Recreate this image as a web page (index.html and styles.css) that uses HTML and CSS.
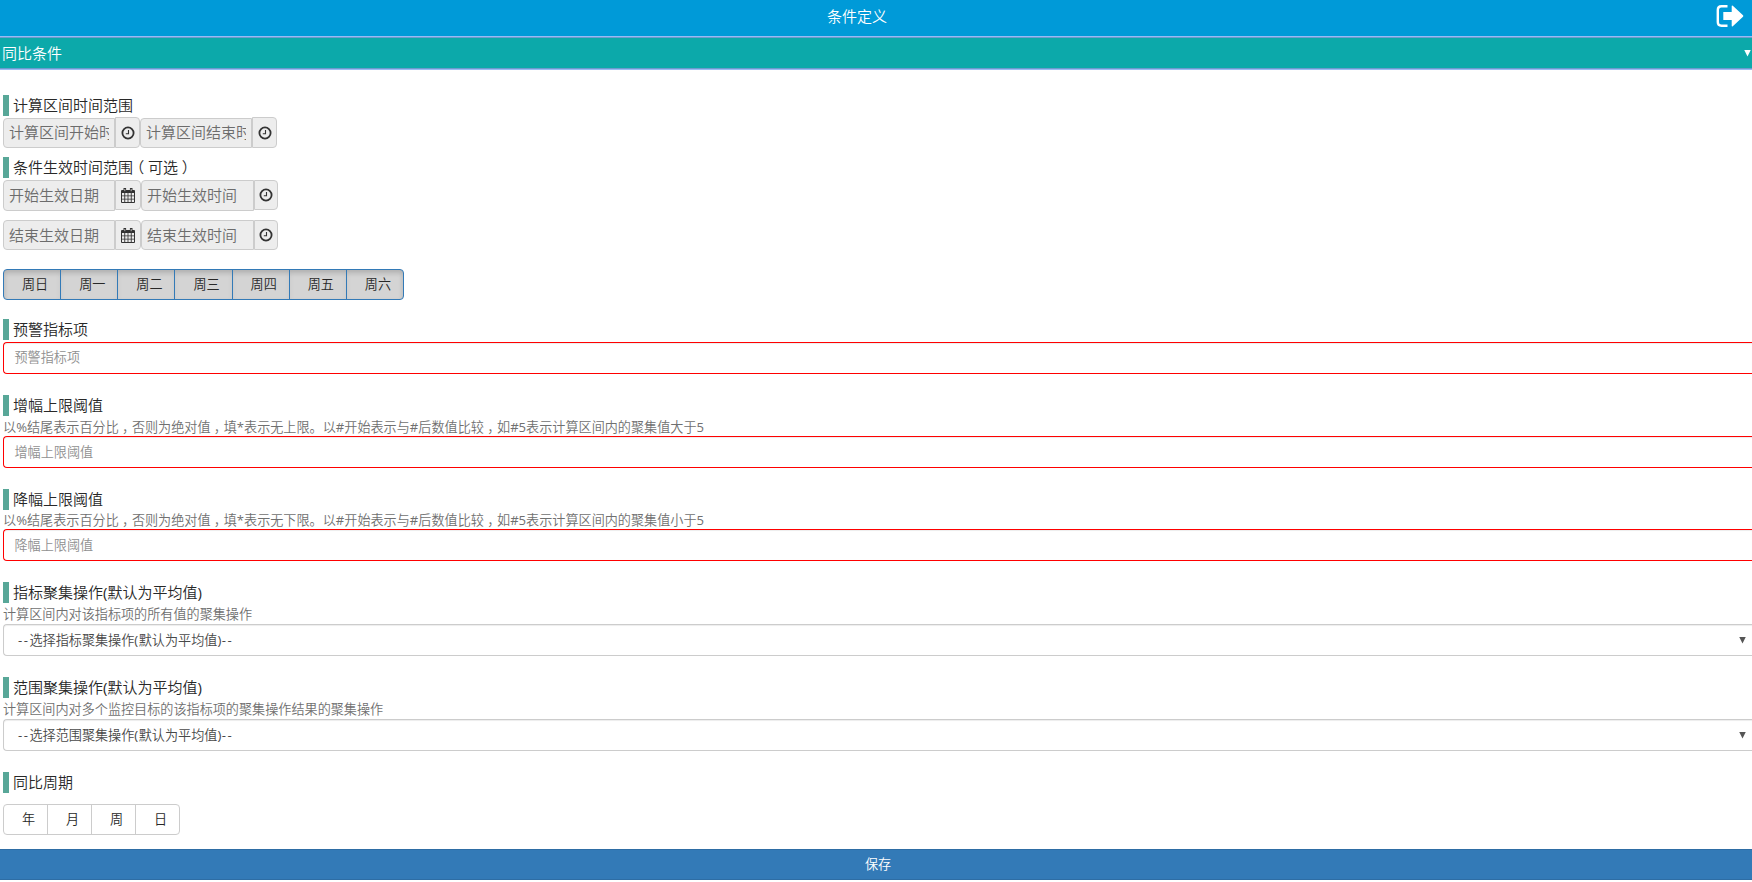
FILE: index.html
```html
<!DOCTYPE html>
<html lang="zh-CN">
<head>
<meta charset="utf-8">
<title>条件定义</title>
<link rel="stylesheet" href="styles.css">
</head>
<body>
<svg class="defs" width="0" height="0">
  <symbol id="clock" viewBox="0 0 14 14"><circle cx="7" cy="7" r="5.6" fill="none" stroke="#333" stroke-width="1.8"/><path d="M7.5 4v3.7H4.8" fill="none" stroke="#333" stroke-width="1.1"/></symbol>
  <symbol id="cal" viewBox="0 0 14 15"><path fill="#333" d="M1 2h12a1 1 0 0 1 1 1v11a1 1 0 0 1-1 1H1a1 1 0 0 1-1-1V3a1 1 0 0 1 1-1z"/><path fill="#333" d="M2.5 0h2.6v4H2.5zM8.9 0h2.6v4H8.9z"/><path fill="#ededed" d="M1 5h2.3v2.4H1zM4.2 5h2.4v2.4H4.2zM7.4 5h2.4v2.4H7.4zM10.7 5H13v2.4h-2.3zM1 8.2h2.3v2.6H1zM4.2 8.2h2.4v2.6H4.2zM7.4 8.2h2.4v2.6H7.4zM10.7 8.2H13v2.6h-2.3zM1 11.6h2.3V14H1zM4.2 11.6h2.4V14H4.2zM7.4 11.6h2.4V14H7.4zM10.7 11.6H13V14h-2.3z"/><path d="M3.8 1v2.2M10.2 1v2.2" stroke="#ededed" stroke-width=".7"/></symbol>
</svg>
<header class="topbar">
  <span class="topbar-title">条件定义</span>
  <svg class="exit" viewBox="0 0 28 22" width="28" height="22"><path d="M11.5 1.3H5.5Q1.8 1.3 1.8 5v12Q1.8 20.7 5.5 20.7h6" fill="none" stroke="#fff" stroke-width="2.4"/><path fill="#fff" d="M7.3 7h8.4V1.2Q15.7 0 16.8.8L27 10.3q.7.7 0 1.4L16.8 21.2q-1.1.8-1.1-.4V15H7.3z"/></svg>
</header>
<div class="panel-head"><span>同比条件</span><i class="tri white"></i></div>
<main class="form">
  <section class="s1">
    <h4>计算区间时间范围</h4>
    <div class="row late">
      <input class="field" readonly placeholder="计算区间开始时间"><div class="addon"><svg><use href="#clock"/></svg></div><input class="field" readonly placeholder="计算区间结束时间"><div class="addon"><svg><use href="#clock"/></svg></div>
    </div>
  </section>
  <section class="s2">
    <h4>条件生效时间范围<b>（</b>可选<b>）</b></h4>
    <div class="row wide tall">
      <input class="field" readonly placeholder="开始生效日期"><div class="addon"><svg class="cal"><use href="#cal"/></svg></div><input class="field" readonly placeholder="开始生效时间"><div class="addon"><svg><use href="#clock"/></svg></div>
    </div>
    <div class="row wide">
      <input class="field" readonly placeholder="结束生效日期"><div class="addon"><svg class="cal"><use href="#cal"/></svg></div><input class="field" readonly placeholder="结束生效时间"><div class="addon"><svg><use href="#clock"/></svg></div>
    </div>
    <div class="group days"><span>周日</span><span>周一</span><span>周二</span><span>周三</span><span>周四</span><span>周五</span><span>周六</span></div>
  </section>
  <section class="s3">
    <h4>预警指标项</h4>
    <div class="input">预警指标项</div>
  </section>
  <section class="s4">
    <h4>增幅上限阈值</h4>
    <p>以<i class="l">%</i>结尾表示百分比<b>，</b>否则为绝对值<b>，</b>填<i class="l">*</i>表示无上限。以<i class="l">#</i>开始表示与<i class="l">#</i>后数值比较<b>，</b>如<i class="l">#5</i>表示计算区间内的聚集值大于<i class="l">5</i></p>
    <div class="input">增幅上限阈值</div>
  </section>
  <section class="s5">
    <h4>降幅上限阈值</h4>
    <p>以<i class="l">%</i>结尾表示百分比<b>，</b>否则为绝对值<b>，</b>填<i class="l">*</i>表示无下限。以<i class="l">#</i>开始表示与<i class="l">#</i>后数值比较<b>，</b>如<i class="l">#5</i>表示计算区间内的聚集值小于<i class="l">5</i></p>
    <div class="input">降幅上限阈值</div>
  </section>
  <section class="s6">
    <h4>指标聚集操作<i class="l">(</i>默认为平均值<i class="l">)</i></h4>
    <p>计算区间内对该指标项的所有值的聚集操作</p>
    <div class="input select"><span><em>--</em>选择指标聚集操作<i class="l">(</i>默认为平均值<i class="l">)</i><em>--</em></span><i class="tri"></i></div>
  </section>
  <section class="s7">
    <h4>范围聚集操作<i class="l">(</i>默认为平均值<i class="l">)</i></h4>
    <p>计算区间内对多个监控目标的该指标项的聚集操作结果的聚集操作</p>
    <div class="input select"><span><em>--</em>选择范围聚集操作<i class="l">(</i>默认为平均值<i class="l">)</i><em>--</em></span><i class="tri"></i></div>
  </section>
  <section class="s8">
    <h4>同比周期</h4>
    <div class="group period"><span>年</span><span>月</span><span>周</span><span>日</span></div>
  </section>
</main>
<div class="save">保存</div>
</body>
</html>
```
FILE: styles.css
```css
* { box-sizing: border-box; }
body { margin: 0; height: 882px; overflow: hidden; background: #fff; color: #282828; font: 350 15px/21px "Open Sans", "Noto Sans CJK SC", sans-serif; white-space: nowrap; }
.defs { position: absolute; }
.topbar { height: 36px; background: #009ad8; color: #fff; display: grid; grid-template-columns: 1fr auto 1fr; align-items: center; padding: 0 8px 4px; }
.topbar-title { grid-column: 2; margin-right: 38px; }
.exit { justify-self: end; }
.panel-head { height: 34px; background: #0ca9aa; color: #fff; border-top: 1px solid #99bbf5; border-bottom: 1px solid #99bbf5; box-shadow: inset 0 1px #6c9bcd, inset 0 -1px #6c9bcd; display: flex; justify-content: space-between; align-items: center; padding: 0 1px 0 2px; }
.tri { width: 7px; height: 7px; background: #555; clip-path: polygon(0 0, 100% 0, 50% 100%); }
.tri.white { background: #fff; }
.form { padding-left: 3px; height: 779px; overflow: hidden; }
section { overflow: hidden; }
h4 { margin: 0; height: 21px; border-left: 6px solid #58a798; padding-left: 4px; font-size: 15px; font-weight: 350; line-height: 21px; }
b { font-family: "Noto Sans CJK SC", sans-serif; font-weight: 350; font-feature-settings: "halt"; padding: 0 .25em; line-height: 1; }
p { margin: 0; height: 20px; font-size: 13.125px; line-height: 22px; color: #707070; }
em { font-style: normal; font-weight: 400; letter-spacing: 1.5px; }
.l { font-style: normal; font-weight: 400; }
.select .l { letter-spacing: .5px; }
.s1 { height: 62px; margin-top: 25px; }
.s2 { height: 162px; }
.s3 { height: 76px; }
.s4 { height: 94px; }
.s5 { height: 93px; }
.s6, .s7 { height: 95px; }
.s8 { height: 70px; }
.row { display: flex; height: 30px; margin-top: 9px; color: #777; }
.late { height: 31px; margin-top: 1px; align-items: flex-end; }
.tall { height: 31px; margin-top: 2px; align-items: flex-start; }
.field { width: 112px; height: 30px; margin: 0; border: 1px solid #ccc; border-radius: 4px 0 0 4px; background: #ededed; padding: 0 5px 1px; font: inherit; color: #6c6c6c; outline: 0; }
.field::placeholder { color: #6c6c6c; opacity: 1; }
.late .field { padding-bottom: 2px; }
.tall .field { height: 31px; }
.addon { width: 25px; height: 30px; border: 1px solid #ccc; border-radius: 0 4px 4px 0; background: #ededed; display: grid; place-items: center; }
.late .addon { height: 31px; }
.addon svg { width: 14px; height: 14px; }
.addon svg.cal { height: 15px; }
.wide .addon:nth-child(2) { width: 26px; }
.wide .field:nth-child(3) { width: 113px; }
.wide .addon:nth-child(4) { width: 24px; }
.group { display: flex; height: 31px; font-size: 13.125px; line-height: 29px; border: 1px solid #ccc; border-radius: 4px; overflow: hidden; }
.group span { flex: 1; padding-left: 18px; border-left: 1px solid #ccc; }
.group span:first-child { border-left: 0; }
.days { margin-top: 19px; width: 401px; border-color: #337ab7; background: #d4d4d4; box-shadow: inset 0 3px 5px rgba(0,0,0,.125); }
.days span { border-color: #337ab7; box-shadow: inset 0 3px 5px rgba(0,0,0,.05); }
.period { width: 177px; margin-top: 11px; }
.input { height: 32px; margin-top: 2px; border: 1px solid #f00; border-right: 0; border-radius: 4px 0 0 4px; padding-left: 10.5px; font-size: 13.125px; line-height: 29px; color: #909090; box-shadow: inset 0 1px 1px rgba(0,0,0,.075); }
p + .input { margin-top: 0; line-height: 30px; }
.s5 p { height: 19px; line-height: 20px; }
.s6 p, .s7 p { height: 21px; line-height: 22px; }
.select { border-color: #ccc; color: #484848; display: flex; justify-content: space-between; align-items: center; padding: 0 6px 0 14px; }
.save { height: 31px; background: #337ab7; border: solid #2e6da4; border-width: 1px 0; color: #fff; text-align: center; font-size: 13.125px; line-height: 29px; padding-left: 4px; }
```
